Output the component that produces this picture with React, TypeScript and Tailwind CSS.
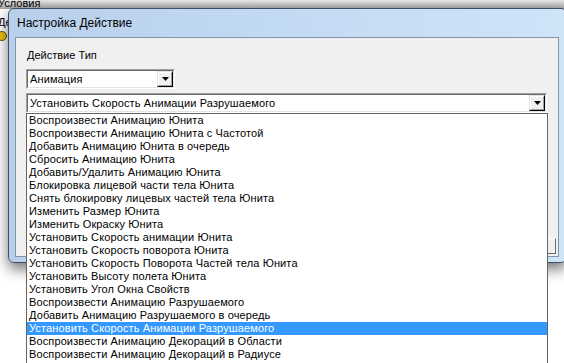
import React from "react";

const items = [
  "Воспроизвести Анимацию Юнита",
  "Воспроизвести Анимацию Юнита с Частотой",
  "Добавить Анимацию Юнита в очередь",
  "Сбросить Анимацию Юнита",
  "Добавить/Удалить Анимацию Юнита",
  "Блокировка лицевой части тела Юнита",
  "Снять блокировку лицевых частей тела Юнита",
  "Изменить Размер Юнита",
  "Изменить Окраску Юнита",
  "Установить Скорость анимации Юнита",
  "Установить Скорость поворота Юнита",
  "Установить Скорость Поворота Частей тела Юнита",
  "Установить Высоту полета Юнита",
  "Установить Угол Окна Свойств",
  "Воспроизвести Анимацию Разрушаемого",
  "Добавить Анимацию Разрушаемого в очередь",
  "Установить Скорость Анимации Разрушаемого",
  "Воспроизвести Анимацию Декораций в Области",
  "Воспроизвести Анимацию Декораций в Радиусе",
];
const selected = 16;

function Arrow() {
  return (
    <svg width="7" height="4" viewBox="0 0 7 4">
      <polygon points="0,0 7,0 3.5,4" fill="#000" />
    </svg>
  );
}

function ComboButton() {
  return (
    <div className="h-full w-[16px] border-t border-l border-t-[#e3e3e3] border-l-[#e3e3e3] border-b border-r border-b-[#000] border-r-[#000]">
      <div className="h-full w-full flex items-center justify-center bg-[#f0f0f0] border-t border-l border-t-white border-l-white border-b border-r border-b-[#a0a0a0] border-r-[#a0a0a0]">
        <Arrow />
      </div>
    </div>
  );
}

function Combo({ text, w }: { text: string; w: string }) {
  return (
    <div className={`${w} h-[20px] border-t border-l border-t-[#a0a0a0] border-l-[#a0a0a0] border-b border-r border-b-white border-r-white`}>
      <div className="h-full w-full flex bg-white border-t border-l border-t-[#696969] border-l-[#696969] border-b border-r border-b-[#e3e3e3] border-r-[#e3e3e3]">
        <div className="flex-1 pl-[2px] text-[11px] tracking-[0.12px] leading-[16px] text-black whitespace-nowrap overflow-hidden">{text}</div>
        <ComboButton />
      </div>
    </div>
  );
}

export default function App() {
  return (
    <div className="relative w-[564px] h-[363px] overflow-hidden bg-white font-['Liberation_Sans',Arial,sans-serif] text-black">
      {/* background window behind */}
      <div className="absolute left-0 top-0 w-[564px] h-[9px] bg-linear-to-b from-[#e8e8e8] to-[#a4a4a4]" />
      <div className="absolute left-[-2px] top-[-3px] text-[11px] leading-[13px]">Условия</div>
      <div className="absolute left-[-2px] top-[16px] text-[11px] leading-[13px]">Де</div>
      <div className="absolute left-[-3px] top-[31px] w-[10px] h-[10px] rounded-full bg-[#e8c010] border border-[#5a4a00]" />

      {/* dialog window */}
      <div className="absolute left-[8px] top-[8px] w-[559px] h-[255px] rounded-[6px] border border-[#3d4f66] bg-linear-to-r from-[#b8d0eb] via-[#c3daf3] to-[#d0e4f8] shadow-[0_6px_14px_rgba(0,0,0,0.55)] flex flex-col pl-[6px] pr-[7px] pb-[5px]">
        <div className="h-[28px] flex items-center pl-[2px] pb-[1px] text-[12px] font-['Liberation_Sans',sans-serif] text-black">
          Настройка Действие
        </div>
        <div className="flex-1 border border-[#8294aa] bg-[#f0f0f0] flex flex-col">
          <div className="pt-[11px] pl-[10px] flex flex-col">
            <div className="ml-[1px] text-[11px] leading-[13px]">Действие Тип</div>
            <div className="mt-[7px]">
              <Combo text="Анимация" w="w-[149px]" />
            </div>
            <div className="mt-[4px]">
              <Combo text="Установить Скорость Анимации Разрушаемого" w="w-[521px]" />
            </div>
          </div>
          <div className="flex-1" />
          <div className="flex justify-end pr-[2px] pb-[2px]">
            <div className="w-[75px] h-[16px] border border-t-white border-l-white border-b-[#696969] border-r-[#696969] bg-[#f0f0f0]" />
          </div>
        </div>
      </div>

      {/* dropped list */}
      <div className="absolute left-[26px] top-[113px] w-[522px] h-[260px] bg-white border border-[#646464]">
        {items.map((t, i) => (
          <div
            key={t}
            className={`h-[13px] pl-[2px] text-[11px] tracking-[0.12px] leading-[13px] whitespace-nowrap ${i === selected ? "bg-[#3399ff] text-white" : "text-black"}`}
          >
            {t}
          </div>
        ))}
      </div>
    </div>
  );
}
